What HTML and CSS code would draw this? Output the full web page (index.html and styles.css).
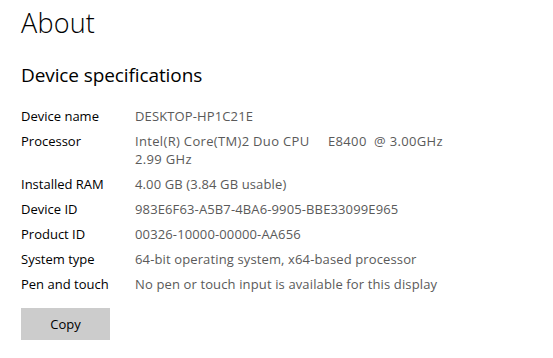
FILE: index.html
```html
<!DOCTYPE html>
<html lang="en">
<head>
<meta charset="utf-8">
<title>About</title>
<link rel="stylesheet" href="styles.css">
</head>
<body>
<main class="page">
  <h1 class="title">About</h1>
  <h2 class="section">Device specifications</h2>
  <dl class="specs">
    <dt>Device name</dt><dd>DESKTOP-HP1C21E</dd>
    <dt>Processor</dt><dd class="wide">Intel(R) Core(TM)2 Duo CPU&nbsp;&nbsp;&nbsp;&nbsp;&nbsp;E8400&nbsp;&nbsp;@ 3.00GHz<br>2.99 GHz</dd>
    <dt>Installed RAM</dt><dd>4.00 GB (3.84 GB usable)</dd>
    <dt>Device ID</dt><dd>983E6F63-A5B7-4BA6-9905-BBE33099E965</dd>
    <dt>Product ID</dt><dd>00326-10000-00000-AA656</dd>
    <dt>System type</dt><dd>64-bit operating system, x64-based processor</dd>
    <dt>Pen and touch</dt><dd>No pen or touch input is available for this display</dd>
  </dl>
  <button class="copy" type="button">Copy</button>
</main>
</body>
</html>
```

FILE: styles.css
```css
html, body {
  margin: 0;
  padding: 0;
  background: #ffffff;
}

.page {
  padding: 4px 0 0 21px;
  font-family: "Open Sans", "Noto Sans", "Liberation Sans", sans-serif;
  color: #000000;
}

.title {
  margin: 0;
  font-size: 27px;
  font-weight: 300;
  line-height: 38px;
  letter-spacing: 0.2px;
}

.section {
  margin: 19px 0 0 0;
  font-size: 19px;
  font-weight: 400;
  line-height: 28px;
  letter-spacing: -0.1px;
}

.specs {
  margin: 18px 0 0 0;
  display: grid;
  grid-template-columns: 114px auto;
  row-gap: 7px;
  font-size: 13px;
  line-height: 18px;
}

.specs dt {
  margin: 0;
  color: #000000;
}

.specs dd {
  margin: 0;
  color: #5a5a5a;
  white-space: nowrap;
  letter-spacing: 0.13px;
}

.specs dd.wide {
  letter-spacing: 0.33px;
}

.copy {
  display: block;
  margin-top: 15px;
  width: 89px;
  height: 32px;
  border: 0;
  padding: 0;
  background: #cccccc;
  font-family: inherit;
  font-size: 13px;
  color: #000000;
}
```
